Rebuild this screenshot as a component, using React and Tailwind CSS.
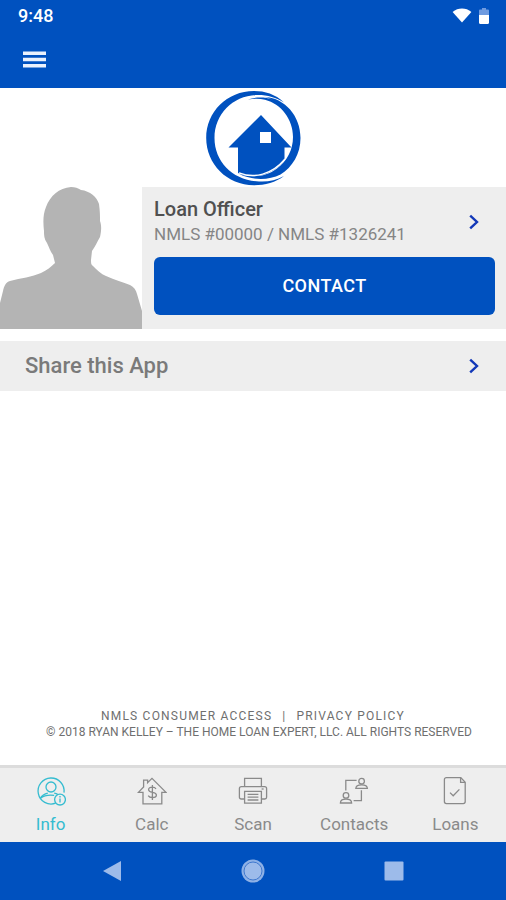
import React from 'react';

const ChevronIcon = () => (
  <svg viewBox="0 0 12 18" className="h-[18px] w-3 shrink-0" fill="none" stroke="#1238b8" strokeWidth="2.4" aria-hidden="true">
    <path d="M2.2 2.6 9 9l-6.8 6.4" />
  </svg>
);

const InfoIcon = () => (
  <>
    <path d="M19.6 27.2A13 13 0 1 1 28 16.6" />
    <circle cx="15" cy="11" r="5" />
    <path d="M4.2 22.4c2-3.2 5-4.6 7.6-5.2M18.2 17.2c1.6.3 2.8.8 3.8 1.4M4.2 22.4c4-3 9-3.800 14-3" />
    <circle cx="24" cy="23.6" r="5.4" />
    <path d="M24 22.6v4M24 20v1.4" />
  </>
);

const CalcIcon = () => (
  <>
    <path d="M6 16.4H1.4L6.6 11V4.2h4v2.6L15 2.4l14 14h-4.2v11.4H6z" />
    <path d="M19 12.8c-.8-1.1-2-1.6-3.6-1.6-2.2 0-3.8.8-3.8 2.5 0 3.6 7.8 1.6 7.800 5.200 0 1.800-1.800 2.600-4 2.600-2 0-3.400-.6-4.200-1.900M15.400 9v15" />
  </>
);

const ScanIcon = () => (
  <>
    <path d="M6.6 10.6V2.4h16.8v8.2" />
    <path d="M6.6 23H3.2c-1 0-1.8-.8-1.8-1.8v-8.6c0-1.2.8-2 2-2h23.2c1.2 0 2 .8 2 2v8.6c0 1-.8 1.8-1.8 1.8h-3.4" />
    <path d="M6.6 15.4h16.8v11.8H6.6zM9.6 18.4h10.8M9.6 21.2h10.8M9.6 24h10.8" />
    <path d="M23.6 13h2" />
  </>
);

const ContactsIcon = () => (
  <>
    <path d="M6.8 14.4V4.4h10.8M14.6 24.6h7.8V14.2" />
    <circle cx="22.6" cy="5.2" r="2.8" />
    <path d="M16.8 12.4c0-2.4 2.4-3.6 5.8-3.6s5.8 1.2 5.8 3.6z" />
    <circle cx="7" cy="19.4" r="2.8" />
    <path d="M1.4 27c0-2.6 2.4-3.8 5.6-3.8s5.6 1.2 5.6 3.8z" />
  </>
);

const LoansIcon = () => (
  <>
    <path d="M6.4 1.6h14.4l4.4 4.6v19.4c0 1.2-.8 2-2 2H6.4c-1.2 0-2-.8-2-2v-22c0-1.200.8-2 2-2z" />
    <path d="M20.6 1.8v4.6H25" />
    <path d="m10 16.600 3.200 3.200 6.200-6.400" />
  </>
);

const tabs = [
  { label: 'Info', href: '#info', Icon: InfoIcon, active: true },
  { label: 'Calc', href: '#calc', Icon: CalcIcon },
  { label: 'Scan', href: '#scan', Icon: ScanIcon },
  { label: 'Contacts', href: '#contacts', Icon: ContactsIcon },
  { label: 'Loans', href: '#loans', Icon: LoansIcon },
];

const Header = () => (
  <header className="bg-[#0051bf] text-white">
    <div className="flex h-8 items-center justify-between pr-4 pl-[18px]">
      <span className="text-lg leading-6 font-medium">9:48</span>
      <div className="flex items-center gap-1.5">
        <svg viewBox="0 0 20 16" className="h-4 w-5" fill="#fff" aria-hidden="true">
          <path d="M.6 4C6-.6 14-.6 19.4 4L10 14.600z" />
        </svg>
        <svg viewBox="0 0 12 18" className="h-[18px] w-3" aria-hidden="true">
          <path d="M4 1h4v1.6h1.800c.7 0 1.200.5 1.200 1.200V8H1V3.800c0-.7.5-1.200 1.200-1.200H4z" fill="#6f9be0" />
          <path d="M1 8h10v7.800c0 .7-.5 1.200-1.200 1.200H2.200C1.500 17 1 16.500 1 15.800z" fill="#fff" />
        </svg>
      </div>
    </div>
    <div className="flex h-14 items-center px-[23px]">
      <button type="button" aria-label="Menu" className="py-2">
        <svg viewBox="0 0 24 18" className="h-[18px] w-6" fill="#eaf1fd" aria-hidden="true">
          <path d="M0 .6h23V4H0zM0 6.800h23v3.400H0zM0 13h23v3.400H0z" />
        </svg>
      </button>
    </div>
  </header>
);

const Logo = () => (
  <svg viewBox="0 0 97 97" className="size-[97px]" role="img" aria-label="Home Loan Expert">
    <g fill="#0051bf">
      {/* house */}
      <path d="M56 26 23.500 58.500H33V84c7 3.600 17 4.200 26 1.500 9-3 16-8 20.500-15.500V58.500h7z" />
      {/* left and right halves of the ring */}
      <path d="M79 13.500C70 5 60 2 49 2 22 2 1.200 23 1.200 49S22 96.200 49 96.200c11 0 22-3 30-9.200-8 4.400-16 6-25 5.500C28 91.500 9.500 73 9.500 49 9.500 25 28 6.500 52 6c10-.2 19 2.500 27 7.500z" />
      <path d="M43 10.500C50 8 60 7.800 67 10.500c-3-1.500-5-2-8-2.700C80 9 95.500 27 95.500 49c0 16-8 29-20 36.500-12 6-28 6-41.500-.5 13 4 27 3 38-5.500C82 72 88 61 88 48 88 30 76 15 60 10.800c-5-1.300-11-1.300-17-.3z" />
    </g>
    <path d="M34 83.800c15 6 33 2 46-13.800" fill="none" stroke="#fff" strokeWidth="1.400" />
    <path d="M55 43h11v11H55z" fill="#fff" />
  </svg>
);

const Avatar = () => (
  <svg viewBox="0 0 142 142" className="size-[142px] shrink-0" fill="#b4b4b4" role="img" aria-label="Loan Officer">
    <path d="M0 142v-26l3-12c1-5 3-9 7-10 11-3 22-4 31-8 6-3 10-6 14-10l-2-8c-3-4-4-8-6-12-3-4-3-8-3-12-1-9-1-17 2-24C50 9 59 1 71 0c4 0 7 1 10 3 9 1 16 7 18 14 1 7 1 12 1 17 2 5 1 12 0 16-3 5-5 10-8 14l-1 9c0 3 0 5 2 6 4 4 8 8 13 10 9 4 17 6 24 9 4 2 6 5 7 9l5 17v18z" />
  </svg>
);

const OfficerCard = () => (
  <section className="flex">
    <Avatar />
    <div className="min-w-0 flex-1 bg-[#eeeeee] pt-2.5 pr-[11px] pb-3.5 pl-3">
      <a href="#officer" className="flex items-center justify-between pr-[15px]">
        <span className="min-w-0">
          <span className="block text-xl leading-6 font-medium text-[#505050]">Loan Officer</span>
          <span className="block text-[17px] leading-[26px] text-[#858585]">NMLS #00000 / NMLS #1326241</span>
        </span>
        <ChevronIcon />
      </a>
      <button type="button" className="mt-2.5 h-[58px] w-full rounded-md bg-[#0051bf] text-lg font-medium tracking-wide text-white">
        CONTACT
      </button>
    </div>
  </section>
);

const Footer = () => (
  <footer className="mt-auto pb-[25px] text-center text-xs leading-4 text-[#6f6f6f]">
    <p className="flex justify-center gap-2.5 tracking-widest">
      <a href="#nmls">NMLS CONSUMER ACCESS</a>
      <span>|</span>
      <a href="#privacy">PRIVACY POLICY</a>
    </p>
    <p className="pl-3">© 2018 RYAN KELLEY – THE HOME LOAN EXPERT, LLC. ALL RIGHTS RESERVED</p>
  </footer>
);

const TabBar = () => (
  <nav className="grid grid-cols-5 border-t-[3px] border-[#dcdcdc] bg-[#eeeeee] pt-2 pb-1.5">
    {tabs.map(({ label, href, Icon, active }) => (
      <a
        key={label}
        href={href}
        className={`flex flex-col items-center gap-1.5 ${active ? 'text-[#35bcd0]' : 'text-[#8a8a8a]'}`}
      >
        <svg viewBox="0 0 30 30" className="size-[30px]" fill="none" stroke="currentColor" strokeWidth="1.3" aria-hidden="true">
          <Icon />
        </svg>
        <span className="text-[17px] leading-6">{label}</span>
      </a>
    ))}
  </nav>
);

const SystemBar = () => (
  <div className="grid h-[58px] grid-cols-3 place-items-center bg-[#0051bf] px-[42px]">
    <button type="button" aria-label="Back">
      <svg viewBox="0 0 24 24" className="size-6" fill="#9dbbea" aria-hidden="true">
        <path d="M21 2v20L3 12z" />
      </svg>
    </button>
    <button type="button" aria-label="Home">
      <svg viewBox="0 0 24 24" className="size-6" aria-hidden="true">
        <circle cx="12" cy="12" r="11.5" fill="#9dbbea" fillOpacity="0.9" />
        <circle cx="12" cy="12" r="9" fill="#9dbbea" stroke="#3f78ce" strokeWidth="1" />
      </svg>
    </button>
    <button type="button" aria-label="Recent apps">
      <svg viewBox="0 0 24 24" className="size-6" fill="#9dbbea" aria-hidden="true">
        <rect x="2.5" y="2.5" width="19" height="19" rx="1" />
      </svg>
    </button>
  </div>
);

const App = () => {
  return (
    <div className="flex min-h-screen flex-col bg-white font-[Roboto,sans-serif]">
      <Header />
      <main className="flex flex-1 flex-col">
        <div className="flex justify-center py-px">
          <Logo />
        </div>
        <OfficerCard />
        <a href="#share" className="mt-3 flex items-center justify-between bg-[#eeeeee] py-3 pr-[26px] pl-[25px]">
          <span className="text-[22px] leading-[26px] font-medium text-[#7a7a7a]">Share this App</span>
          <ChevronIcon />
        </a>
        <Footer />
      </main>
      <TabBar />
      <SystemBar />
    </div>
  );
};

export default App;
